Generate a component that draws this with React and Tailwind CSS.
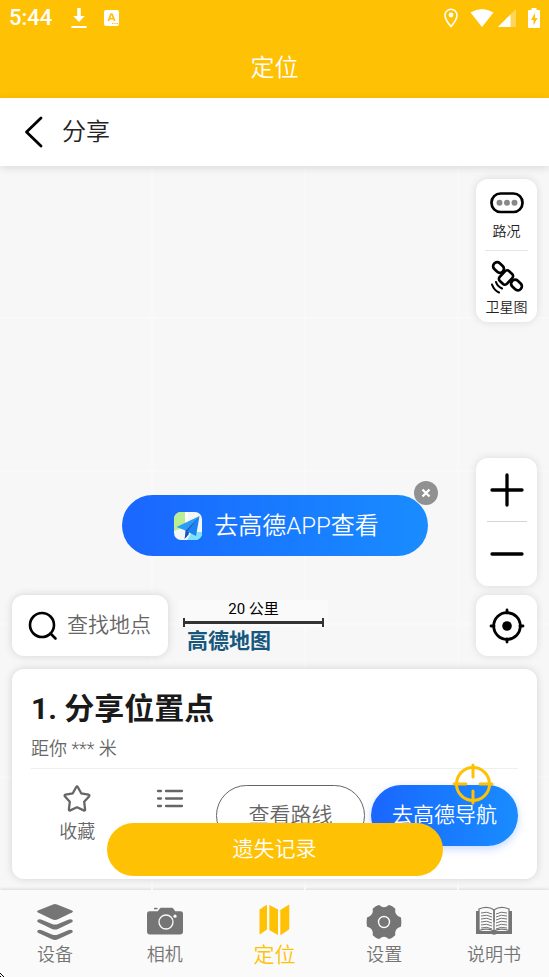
import React, { useState } from 'react';

const DevicesIcon = () => (
  <svg viewBox="0 0 36 36" className="w-9 h-9" fill="currentColor">
    <path d="M16 .4q2-.6 4 0l15 6q1.800 1 0 2L21 15.300q-3 1.200-6 0L1 8.400q-1.800-1 0-2z" />
    <path d="M.2 16.900q0-1.600 2.300-1.600 1.500 0 3.500.9l9 3.900q3 1 6 0l9-3.900q2-.9 3.500-.9 2.300 0 2.300 1.600 0 1-1.800 1.900L21 25q-3 1.200-6 0L2 18.800Q.2 17.900.2 16.900z" />
    <path d="M.2 27.400q0-1.600 2.300-1.600 1.500 0 3.500.9l9 3.900q3 1 6 0l9-3.900q2-.9 3.500-.9 2.300 0 2.300 1.600 0 1-1.800 1.900L21 35.300q-3 1.200-6 0L2 29.300Q.2 28.400.2 27.400z" />
  </svg>
);

const CameraIcon = () => (
  <svg viewBox="0 0 36 36" className="w-9 h-9" fill="currentColor">
    <path d="M7 3.800h3.500v1.500H7z" />
    <path d="M2.500 7.300h8.300l2-2.800q.4-.7 1.300-.7h10.800q.9 0 1.300.7l2 2.800h5.300Q36 7.300 36 9.800v17.700q0 3-3 3H3q-3 0-3-3V9.800q0-2.500 2.500-2.500z" />
    <circle cx="19" cy="18" r="7" fill="none" stroke="#fafafa" strokeWidth="1.300" />
    <circle cx="28" cy="12.200" r="1.600" fill="#fafafa" />
  </svg>
);

const MapIcon = () => (
  <svg viewBox="0 0 36 36" className="w-9 h-9" fill="currentColor">
    <path d="M3.500 5.500l6.500-4.300q1-.5 1 .5v23.800L4.500 30q-1 .7-1-.5z" />
    <path d="M13.300 1l8.700 4.500v25.500l-8-4.500q-.7-.4-.7-1z" />
    <path d="M24.300 6v24.500q0 .8.800.3l7.200-4.900q1-.7 1-1.500V1.500q0-1.200-1-.5z" />
  </svg>
);

const GearIcon = () => (
  <svg viewBox="0 0 36 36" className="w-9 h-9">
    <path
      fill="currentColor"
      stroke="currentColor"
      strokeWidth="1.500"
      strokeLinejoin="round"
      d="M34.300 14Q35 18 34.300 22Q27.500 24 28.500 31Q26 33.500 23 34.200Q18 29.500 13 34.200Q10 33.500 7.500 31Q8.500 24 1.700 22Q1 18 1.700 14Q8.500 12 7.500 5Q10 2.500 13 1.800Q18 6.500 23 1.800Q26 2.500 28.500 5Q27.500 12 34.300 14z"
    />
    <circle cx="18" cy="18" r="5.500" fill="none" stroke="#fafafa" strokeWidth="1.400" />
  </svg>
);

const ManualIcon = () => (
  <svg viewBox="0 0 36 36" className="w-9 h-9" fill="none" stroke="currentColor">
    <path fill="currentColor" stroke="none" d="M0 7h3v20h30V7h3v23H20.500q-2.500 1.500-5 0H0z" />
    <path fill="#fafafa" strokeWidth="1.300" d="M3 5Q12 1.500 18 6v21Q12 23.500 3 26.500zM33 5Q24 1.500 18 6v21Q24 23.500 33 26.500z" />
    <path strokeWidth="1" d="M5 9q6-2 11 1M5 12q6-2 11 1M5 15q6-2 11 1M5 18q6-2 11 1M5 21q6-2 11 1M5 24q6-2 11 1M31 9q-6-2-11 1M31 12q-6-2-11 1M31 15q-6-2-11 1M31 18q-6-2-11 1M31 21q-6-2-11 1M31 24q-6-2-11 1" />
    <path strokeWidth="1.500" d="M18 6v12" />
  </svg>
);

const tabs = [
  { id: 'devices', label: '设备', Icon: DevicesIcon },
  { id: 'camera', label: '相机', Icon: CameraIcon },
  { id: 'location', label: '定位', Icon: MapIcon },
  { id: 'settings', label: '设置', Icon: GearIcon },
  { id: 'manual', label: '说明书', Icon: ManualIcon },
];

const StatusBar = () => (
  <div className="flex items-center justify-between h-9 px-[9px]">
    <div className="flex items-center">
      <span className="text-[22px] leading-10 font-medium w-[62px]">5:44</span>
      <svg viewBox="0 0 16 22" className="w-4 h-[22px]" fill="#fff">
        <path d="M6.200 1h3.600v8h4L8 15 2.200 9h4zM.5 19h15v2H.5z" />
      </svg>
      <svg viewBox="0 0 16 16" className="w-4 h-4 ml-4">
        <rect x="1" y="0" width="15" height="16" rx="2" fill="#fff" />
        <path d="M5.300 11l2.700-7h1l2.700 7M6.500 8.700h4" fill="none" stroke="#ffc107" strokeWidth="1.700" />
        <path d="M9 13.500h1.300M11.300 13.500h1.300M13.500 13.500h1.300" stroke="#ffc107" strokeWidth="1.200" />
      </svg>
    </div>
    <div className="flex items-center">
      <svg viewBox="0 0 14 20" className="w-[14px] h-5 mr-3">
        <path d="M7 1.200A6 6 0 0 0 1 7.200C1 11.500 7 18.500 7 18.500s6-7 6-11.300a6 6 0 0 0-6-6z" fill="none" stroke="#fff" strokeWidth="1.600" />
        <circle cx="7" cy="7" r="2.400" fill="#fff" />
      </svg>
      <svg viewBox="0 0 24 20" className="w-6 h-5" fill="#fff">
        <path d="M.5 4.500Q12-2.500 23.500 4.500L12 19z" />
      </svg>
      <svg viewBox="0 0 18 18" className="w-[18px] h-[18px] ml-1 mr-3" fill="#fff">
        <path d="M18 0v18H0z" opacity=".35" />
        <path d="M12.500 5.500V18H0z" />
      </svg>
      <svg viewBox="0 0 12 20" className="w-3 h-5">
        <path d="M3.500 0h5v2H11q1 0 1 1v16q0 1-1 1H1q-1 0-1-1V3q0-1 1-1h2.500z" fill="#fff" />
        <path d="M7 5L3 12h2.500v5.500L9.500 10H7z" fill="#ffc107" />
      </svg>
    </div>
  </div>
);

const MapLayers = () => (
  <div className="self-end flex flex-col items-center w-[61px] h-[143px] bg-white rounded-xl shadow-[0_0_8px_rgba(0,0,0,0.12)] text-[#222]">
    <button className="flex flex-col items-center h-[71px] pt-3">
      <svg viewBox="0 0 34 24" className="w-[34px] h-6">
        <rect x="1.500" y="2.500" width="31" height="18.500" rx="9" fill="none" stroke="#000" strokeWidth="2.700" />
        <circle cx="9.500" cy="11.800" r="3" fill="#888" />
        <circle cx="17" cy="11.800" r="3" fill="#888" />
        <circle cx="24.500" cy="11.800" r="3" fill="#888" />
      </svg>
      <span className="text-[14px] leading-6 mt-1">路况</span>
    </button>
    <div className="w-[43px] h-px bg-[#e5e5e5]" />
    <button className="flex flex-col items-center pt-2">
      <svg viewBox="0 0 34 36" className="w-[34px] h-9" fill="none" stroke="#000" strokeWidth="2.700" strokeLinecap="round">
        <rect x="-5.800" y="-4" width="11.600" height="8" rx="3.800" transform="translate(8.500 8.500) rotate(43)" />
        <rect x="-6.800" y="-5" width="13.600" height="10" rx="3" transform="translate(16 18.500) rotate(-47)" />
        <rect x="-5.800" y="-4" width="11.600" height="8" rx="3.800" transform="translate(26.500 26) rotate(43)" />
        <path strokeWidth="2.100" d="M6 23q1.500 4.500 6 6.500M2 25.500q2.200 6 7 8" />
      </svg>
      <span className="text-[14px] leading-6 whitespace-nowrap">卫星图</span>
    </button>
  </div>
);

const ZoomControls = () => (
  <div className="self-end flex flex-col items-center w-[61px] h-32 bg-white rounded-xl shadow-[0_0_8px_rgba(0,0,0,0.12)]">
    <button aria-label="放大" className="h-[63px]">
      <svg viewBox="0 0 34 34" className="w-[34px] h-[34px]" stroke="#000" strokeWidth="3.300" strokeLinecap="round">
        <path d="M2 17h30M17 2v30" />
      </svg>
    </button>
    <div className="w-10 h-px bg-[#d5d5d5]" />
    <button aria-label="缩小" className="flex-1">
      <svg viewBox="0 0 34 34" className="w-[34px] h-[34px]" stroke="#000" strokeWidth="3.300" strokeLinecap="round">
        <path d="M2 17h30" />
      </svg>
    </button>
  </div>
);

const OpenAppBanner = ({ onClose }) => (
  <div className="absolute left-1/2 bottom-[334px] -translate-x-1/2">
    <a href="#app" className="flex items-center justify-center w-[306px] h-[61px] pl-1 rounded-full bg-gradient-to-r from-[#1b66ff] to-[#1a8cff] text-white text-[24px] whitespace-nowrap">
      <svg viewBox="0 0 28 28" className="w-7 h-7 mr-3">
        <defs>
          <clipPath id="logoClip">
            <rect width="28" height="28" rx="7" />
          </clipPath>
        </defs>
        <g clipPath="url(#logoClip)">
          <rect width="28" height="28" fill="#f1f6f7" />
          <path d="M0 0h11v15L0 19z" fill="#b9ee95" />
          <path d="M11 0h3v12l-3 3z" fill="#fff" />
          <path d="M13 28l5-8h10v8z" fill="#7de3fb" />
          <path d="M12 19l-1.500 8L15 22z" fill="#1d3f9c" />
          <path d="M25.500 4L2.500 15l9 3.500z" fill="#2a9df5" />
          <path d="M25.500 4L11.500 18.500V26l3.500-5.500z" fill="#1453c8" />
          <path d="M25.500 4L13 19.500l9 4.500z" fill="#1b83f2" />
        </g>
      </svg>
      去高德APP查看
    </a>
    <button aria-label="关闭" onClick={onClose} className="absolute -top-[14px] -right-[10px] w-6 h-6 rounded-full bg-[#919191] flex items-center justify-center">
      <svg viewBox="0 0 10 10" className="w-[10px] h-[10px]" stroke="#fff" strokeWidth="2.300">
        <path d="M1.500 1.500l7 7M8.500 1.500l-7 7" />
      </svg>
    </button>
  </div>
);

const PlaceCard = () => (
  <section className="h-[210px] mt-[13px] px-[19px] bg-white rounded-xl shadow-[0_0_8px_rgba(0,0,0,0.15)]">
    <h2 className="text-[30px] leading-10 pt-5 font-bold text-[#1a1a1a]">1. 分享位置点</h2>
    <p className="text-[18px] leading-[39px] text-[#666]">距你 *** 米</p>
    <div className="flex pt-4 border-t border-[#eee] text-[#666]">
      <button className="flex-1 flex flex-col items-center text-[18px] leading-[38px]">
        <svg viewBox="0 0 28 28" className="w-7 h-7" fill="none" stroke="#666" strokeWidth="2.300" strokeLinejoin="round">
          <path d="M13.100 2.300q.9-1.600 1.800 0l3.300 6 7.200 1.400q1.700.4.600 1.700l-4.800 5.400.9 7.500q.1 1.700-1.400 1.100L14 22.300l-6.700 3.100q-1.500.6-1.400-1.100l.9-7.500L2 11.400q-1.100-1.300.6-1.700l7.200-1.400z" />
        </svg>
        收藏
      </button>
      <button aria-label="列表" className="flex-1 flex flex-col items-center">
        <svg viewBox="0 0 28 28" className="w-7 h-7" stroke="#666" strokeWidth="2.300" strokeLinecap="round">
          <path d="M2 6h3M10 6h16M2 13.500h3M10 13.500h16M2 21h3M10 21h16" />
        </svg>
      </button>
      <button className="w-[149px] h-[61px] shrink-0 rounded-full border border-[#666] text-[21px]">查看路线</button>
      <button className="ml-[6px] w-[147px] h-[61px] shrink-0 rounded-full bg-gradient-to-r from-[#1b66ff] to-[#1a8cff] text-[21px] text-white shadow-[0_3px_8px_rgba(26,102,255,0.25)]">
        去高德导航
      </button>
    </div>
  </section>
);

const App = () => {
  const [activeTab, setActiveTab] = useState('location');
  const [showBanner, setShowBanner] = useState(true);
  const [search, setSearch] = useState('');

  return (
    <div className="relative min-h-screen flex flex-col bg-[#f7f7f7] font-[350] font-[Roboto,'Noto_Sans_CJK_SC',sans-serif]">
      <header className="bg-[#ffc104] text-white">
        <StatusBar />
        <h1 className="h-[62px] text-center text-[24px] leading-[64px] font-[350]">定位</h1>
      </header>

      <div className="relative z-10 flex items-center h-[68px] pl-6 bg-white shadow-[0_2px_8px_rgba(0,0,0,0.12)]">
        <button aria-label="返回">
          <svg viewBox="0 0 20 32" className="w-5 h-8" fill="none" stroke="#000" strokeWidth="2.800" strokeLinecap="round" strokeLinejoin="round">
            <path d="M17 2L2.500 16 17 30" />
          </svg>
        </button>
        <span className="ml-[18px] text-[24px] text-[#222]">分享</span>
      </div>

      <main className="relative flex-1 flex flex-col px-3 pt-[13px] pb-[11px] bg-[linear-gradient(to_right,#f9f9f9_2px,transparent_2px),linear-gradient(to_bottom,#f9f9f9_2px,transparent_2px)] bg-[size:153px_153px] bg-[position:-2px_-2px]">
        <MapLayers />
        <div className="flex-1" />
        <ZoomControls />

        <div className="flex items-start mt-[9px]">
          <label className="flex items-center w-[156px] h-[61px] pl-4 bg-white rounded-xl shadow-[0_0_8px_rgba(0,0,0,0.15)]">
            <svg viewBox="0 0 30 30" className="w-[30px] h-[30px] shrink-0" fill="none" stroke="#000" strokeWidth="2.600" strokeLinecap="round">
              <circle cx="14" cy="14" r="12" />
              <path d="M22.500 22.500l5 5" />
            </svg>
            <input
              aria-label="查找地点"
              type="text"
              value={search}
              onChange={(e) => setSearch(e.target.value)}
              placeholder="查找地点"
              className="ml-[9px] w-24 text-[21px] font-[350] outline-none placeholder:text-[#666]"
            />
          </label>

          <div className="ml-[11px] mt-[5px] w-[149px]">
            <div className="px-1 bg-[#fafafa] text-center text-black text-[15px] leading-[18px] font-normal">
              20 公里
              <div className="flex items-center h-[9px] border-x-2 border-[#333]">
                <div className="flex-1 h-[3px] bg-[#333]" />
              </div>
            </div>
            <div className="pl-2 mt-[2px] text-[21px] leading-6 font-bold text-[#17577e]">高德地图</div>
          </div>

          <button aria-label="当前位置" className="ml-auto w-[61px] h-[61px] flex items-center justify-center bg-white rounded-xl shadow-[0_0_8px_rgba(0,0,0,0.12)]">
            <svg viewBox="0 0 36 36" className="w-9 h-9" fill="none" stroke="#000" strokeWidth="2.800" strokeLinecap="round">
              <circle cx="18" cy="18" r="13.300" />
              <circle cx="18" cy="18" r="4.800" fill="#000" stroke="none" />
              <path d="M18 2v3M18 31v3M2 18h3M31 18h3" />
            </svg>
          </button>
        </div>

        <PlaceCard />

        {showBanner && <OpenAppBanner onClose={() => setShowBanner(false)} />}

        <button className="absolute bottom-[14px] left-1/2 -translate-x-1/2 w-[336px] h-[53px] rounded-full bg-[#ffc104] text-white text-[21px]">
          遗失记录
        </button>
        <button aria-label="定位我" className="absolute right-[55px] bottom-[85px]">
          <svg viewBox="0 0 42 42" className="w-[42px] h-[42px]" fill="none" stroke="#ffc104" strokeWidth="3" strokeLinecap="round">
            <circle cx="21" cy="21" r="16.500" />
            <path d="M21 2v12M21 28v12M2 21h12M28 21h12" />
          </svg>
        </button>
      </main>

      <nav className="flex h-[87px] bg-[#fafafa] shadow-[0_-1px_3px_rgba(0,0,0,0.12)]">
        {tabs.map(({ id, label, Icon }) => (
          <button
            key={id}
            onClick={() => setActiveTab(id)}
            className={`flex-1 flex flex-col items-center pt-[14px] ${
              activeTab === id ? 'text-[#ffc104] text-[21px]' : 'text-[#757575] text-[18px]'
            }`}
          >
            <Icon />
            <span className="leading-[30px]">{label}</span>
          </button>
        ))}
      </nav>

      <svg viewBox="0 0 4 4" className="absolute left-0 bottom-0 w-1 h-1" fill="#000">
        <path d="M0 0h1v1H0zM1 1h1v1H1zM2 2h1v1H2zM3 3h1v1H3zM0 3h1v1H0z" />
      </svg>
    </div>
  );
};

export default App;
